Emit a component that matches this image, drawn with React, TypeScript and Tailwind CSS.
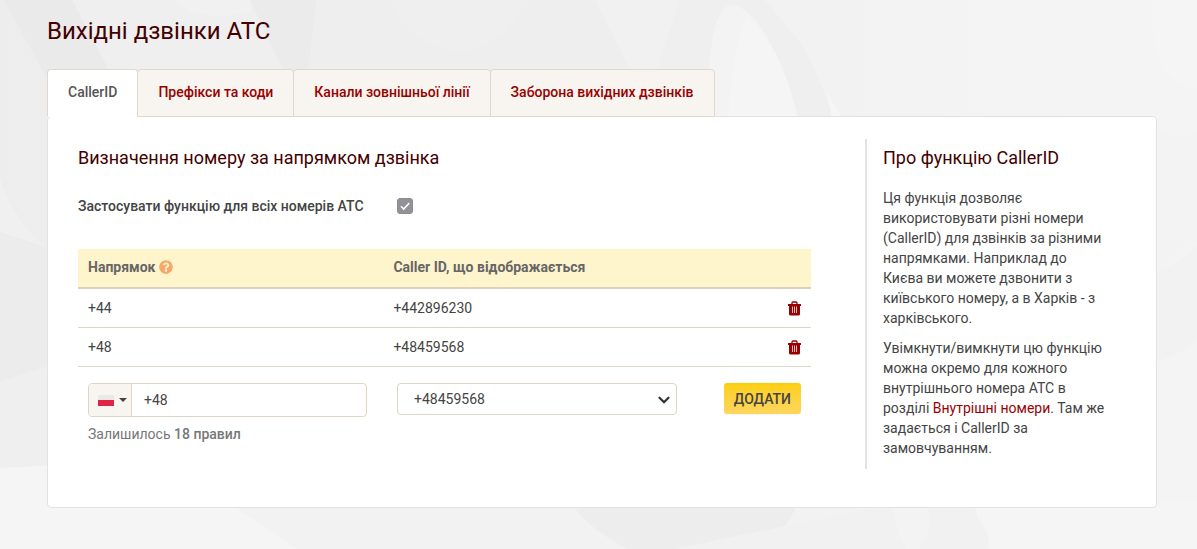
import { useState } from "react";
import { ChevronDown } from "lucide-react";
import { FaQuestionCircle } from "react-icons/fa";

type Rule = { prefix: string; callerId: string };

const tabs = [
  "CallerID",
  "Префікси та коди",
  "Канали зовнішньої лінії",
  "Заборона вихідних дзвінків",
];

const initialRules: Rule[] = [
  { prefix: "+44", callerId: "+442896230" },
  { prefix: "+48", callerId: "+48459568" },
];

function Backdrop() {
  return (
    <svg
      aria-hidden="true"
      className="absolute inset-0 -z-10 h-full w-full"
      viewBox="0 0 1197 549"
      preserveAspectRatio="xMidYMid slice"
    >
      <defs>
        <linearGradient id="base" x1="0" x2="1" y1="0" y2="0">
          <stop offset="0" stopColor="#ededed" />
          <stop offset="0.45" stopColor="#f0f0f0" />
          <stop offset="0.8" stopColor="#f3f3f3" />
          <stop offset="1" stopColor="#f4f4f4" />
        </linearGradient>
      </defs>
      <rect width="1197" height="549" fill="url(#base)" />
      <path d="M4 0H72L134 120H70Z" fill="#eaeaea" />
      <path d="M72 0H250L290 85H118Z" fill="#efefef" />
      <path d="M175 0Q195 24 250 12V0Z" fill="#f1f1f1" />
      <path d="M250 0H317L307 80H288Z" fill="#ebebeb" />
      <path d="M317 0H595L635 80H307Z" fill="#eeeeee" />
      <path d="M400 20Q450 75 505 32L530 0H390Z" fill="#efefef" />
      <path d="M680 0H765L800 42Q822 80 834 120H640Z" fill="#efefef" />
      <path d="M709 70C712 25 720 5 732 5C756 8 780 50 797 120H705Z" fill="#f3f3f3" />
      <path d="M746 15C775 42 790 80 798 120H728Q732 60 746 15Z" fill="#f5f5f5" />
      <path d="M827 93L842 118H832Z" fill="#f6f6f6" />
      <path d="M1112 0H1197V90L1110 120L1073 100Z" fill="#f4f4f4" />
      <path d="M1153 28Q1155 84 1197 88V0H1153Z" fill="#f5f5f5" />
      <path d="M0 178Q14 222 48 248L0 232Z" fill="#f0f0f0" />
      <path d="M0 232L48 248V366L0 382Z" fill="#ececec" />
      <path d="M0 382L48 366V466L0 468Z" fill="#efefef" />
      <path d="M1150 130Q1180 140 1197 134V240L1150 280Z" fill="#f3f3f3" />
      <path d="M1150 277Q1178 264 1197 246V340Q1178 356 1150 364Z" fill="#f2f2f2" />
      <path d="M0 468L80 464L237 508L297 549H0Z" fill="#f5f5f5" />
      <path d="M237 508H583L640 549H297Z" fill="#f2f2f2" />
      <path d="M583 518L560 490H803C793 518 780 537 762 549H628Q603 537 583 518Z" fill="#ededed" />
      <path d="M792 518L800 500H885V513L675 549H762Q783 536 792 518Z" fill="#f2f2f2" />
      <path d="M885 505H970Q990 524 989 549H675Z" fill="#f1f1f1" />
      <path d="M893 508H928Q936 535 913 555Q901 552 893 508Z" fill="#f3f3f3" />
      <path d="M977 500H1197V549H989Q991 533 977 517Z" fill="#f5f5f5" />
    </svg>
  );
}

function TrashIcon() {
  return (
    <svg width="13" height="15" viewBox="0 0 13 15" fill="none" aria-hidden="true">
      <path d="M4 3V2Q4 1 5 1H8Q9 1 9 2V3" stroke="#990000" strokeWidth="1.3" />
      <path d="M0 3H13V5H0Z" fill="#990000" />
      <path d="M1 4H12V13Q12 14.5 10.5 14.5H2.5Q1 14.5 1 13Z" fill="#990000" />
      <path d="M4.5 5.5V12M6.5 5.5V12M8.5 5.5V12" stroke="#f0d0d0" strokeWidth="0.9" />
    </svg>
  );
}

function RulesTable({ rules, onRemove }: { rules: Rule[]; onRemove: (index: number) => void }) {
  return (
    <table className="w-full table-fixed border-collapse text-left">
      <thead>
        <tr className="border-b-2 border-[#ddd0bc] bg-[#fff5cc] text-[#666666]">
          <th className="w-5/12 px-[10px] pt-2 pb-[10px] font-bold">
            <span className="flex items-center gap-1">
              Напрямок
              <FaQuestionCircle className="size-[14px] text-[#f9a66c]" />
            </span>
          </th>
          <th className="w-1/2 px-[10px] pt-2 pb-[10px] font-bold">Caller ID, що відображається</th>
          <th className="w-1/12" />
        </tr>
      </thead>
      <tbody>
        {rules.map((rule, index) => (
          <tr key={rule.prefix} className="border-b border-[#ddd5c5]">
            <td className="px-[10px] py-[9px]">{rule.prefix}</td>
            <td className="px-[10px] py-[9px]">{rule.callerId}</td>
            <td className="px-[10px]">
              <button
                type="button"
                aria-label="Видалити"
                onClick={() => onRemove(index)}
                className="ml-auto block cursor-pointer"
              >
                <TrashIcon />
              </button>
            </td>
          </tr>
        ))}
      </tbody>
    </table>
  );
}

export default function App() {
  const [activeTab, setActiveTab] = useState(0);
  const [rules, setRules] = useState(initialRules);
  const [applyToAll, setApplyToAll] = useState(true);
  const [prefix, setPrefix] = useState("+48");
  const [callerId, setCallerId] = useState("+48459568");

  const addRule = (e: React.FormEvent<HTMLFormElement>) => {
    e.preventDefault();
    if (prefix === "" || rules.some((rule) => rule.prefix === prefix)) return;
    setRules((prev) => [...prev, { prefix, callerId }]);
  };

  return (
    <main className="relative isolate min-h-screen overflow-hidden px-10 pt-4 pb-10 font-[Roboto,sans-serif] text-sm leading-5 text-[#444444] lg:pl-[47px]">
      <Backdrop />
      <h1 className="mb-[23px] text-2xl leading-[30px] text-[#440000]">Вихідні дзвінки АТС</h1>

      <div role="tablist" className="relative z-10 -mb-px flex">
        {tabs.map((tab, index) => (
          <button
            key={tab}
            type="button"
            role="tab"
            aria-selected={index === activeTab}
            onClick={() => setActiveTab(index)}
            className={
              index === activeTab
                ? "h-12 rounded-t border border-[#e0d8cc] border-b-white bg-white px-5 pb-[2px] font-medium text-[#555555]"
                : "-ml-px h-12 rounded-t border border-[#e0d8cc] bg-[#f8f4ef] px-5 pb-[2px] font-medium text-[#990000]"
            }
          >
            {tab}
          </button>
        ))}
      </div>

      <div className="flex rounded border border-[#e2e2e2] bg-white px-[30px] pt-[22px] pb-[38px]">
        <section className="min-w-0 flex-1 pt-2 pr-[54px]">
          <h2 className="text-lg leading-[22px] text-[#440000]">Визначення номеру за напрямком дзвінка</h2>

          <div className="mt-[27px] mb-[33px] flex items-center">
            <label htmlFor="apply-all" className="w-[319px] font-medium">
              Застосувати функцію для всіх номерів АТС
            </label>
            <span className="relative flex">
              <input
                id="apply-all"
                type="checkbox"
                checked={applyToAll}
                onChange={(e) => setApplyToAll(e.target.checked)}
                className="size-4 appearance-none rounded-[3px] border border-[#8b8b92] checked:bg-[#929298]"
              />
              {applyToAll && (
                <svg viewBox="0 0 16 16" className="pointer-events-none absolute inset-0 size-4" fill="none">
                  <path d="M4 8.3L6.7 11L12.3 5" stroke="white" strokeWidth="1.6" />
                </svg>
              )}
            </span>
          </div>

          <RulesTable
            rules={rules}
            onRemove={(index) => setRules((prev) => prev.filter((_, i) => i !== index))}
          />

          <form onSubmit={addRule} className="flex items-start px-[10px] pt-4">
            <div className="flex h-[34px] w-[279px] overflow-hidden rounded border border-[#ddd5c5] bg-white">
              <button
                type="button"
                aria-label="Країна"
                className="flex w-[43px] items-center justify-between border-r border-[#ddd5c5] bg-[#f8f4ef] pr-1 pl-[9px]"
              >
                <svg width="16" height="11" viewBox="0 0 16 11" aria-hidden="true">
                  <rect width="16" height="6" fill="#e9e9e9" />
                  <rect y="5" width="16" height="6" fill="#dc2545" />
                </svg>
                <svg width="8" height="4" viewBox="0 0 8 4" aria-hidden="true">
                  <path d="M0 0H8L4 4Z" fill="#444444" />
                </svg>
              </button>
              <input
                aria-label="Напрямок"
                value={prefix}
                onChange={(e) => setPrefix(e.target.value)}
                className="min-w-0 flex-1 px-3 outline-none"
              />
            </div>
            <div className="relative ml-[30px] w-[280px]">
              <select
                aria-label="Caller ID"
                value={callerId}
                onChange={(e) => setCallerId(e.target.value)}
                className="h-8 w-full appearance-none rounded border border-[#ddd5c5] bg-white px-4"
              >
                <option>+48459568</option>
                <option>+442896230</option>
              </select>
              <ChevronDown
                strokeWidth={3}
                className="pointer-events-none absolute top-2 right-1 size-[18px] text-[#333333]"
              />
            </div>
            <button
              type="submit"
              className="ml-auto h-[31px] cursor-pointer rounded-[3px] bg-linear-to-b from-[#fccf00] to-[#ffd65c] px-[10px] font-medium shadow-xs"
            >
              ДОДАТИ
            </button>
          </form>
          <p className="mt-[7px] px-[10px] text-[#777777]">
            Залишилось <b className="font-medium">18 правил</b>
          </p>
        </section>

        <aside className="w-[261px] shrink-0 border-l-2 border-[#e2e2e2] pt-2 pr-5 pb-[11px] pl-4">
          <h2 className="text-lg leading-[22px] text-[#440000]">Про функцію CallerID</h2>
          <p className="mt-[19px]">
            Ця функція дозволяє використовувати різні номери (CallerID) для дзвінків за різними
            напрямками. Наприклад до Києва ви можете дзвонити з київського номеру, а в Харків - з
            харківського.
          </p>
          <p className="mt-[10px]">
            Увімкнути/вимкнути цю функцію можна окремо для кожного внутрішнього номера АТС в розділі{" "}
            <a href="#" className="text-[#990000]">
              Внутрішні номери
            </a>
            . Там же задається і CallerID за замовчуванням.
          </p>
        </aside>
      </div>
    </main>
  );
}
